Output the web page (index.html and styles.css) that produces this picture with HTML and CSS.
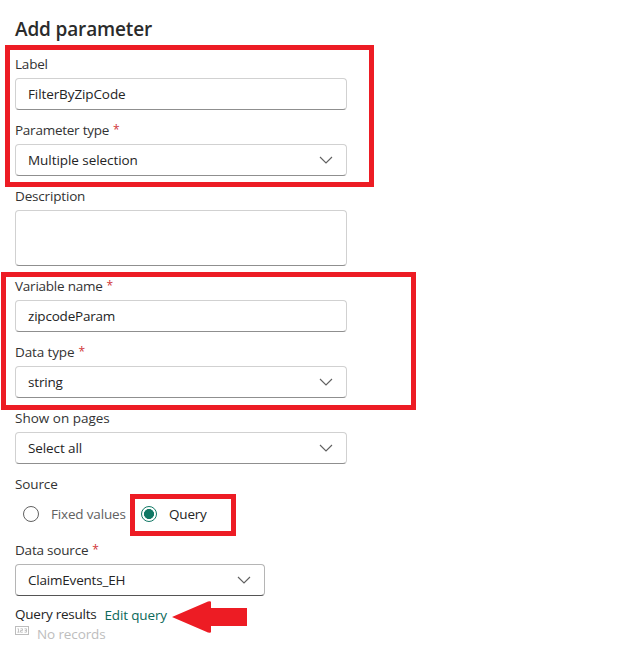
FILE: index.html
```
<!DOCTYPE html>
<html lang="en">
<head>
<meta charset="utf-8">
<title>Add parameter</title>
<link rel="stylesheet" href="styles.css">
</head>
<body>
<svg width="0" height="0" class="defs"><symbol id="chev" viewBox="0 0 14 8"><path d="M1 1 7 7 13 1" fill="none" stroke="currentColor" stroke-width="1.15"/></symbol></svg>
<main class="panel">
  <h1><span class="t-title">Add parameter</span></h1>
  <div class="field"><label><span class="t-label">Label</span></label><div class="box"><span class="t-filter">FilterByZipCode</span></div></div>
  <div class="field"><label><span class="t-ptype">Parameter type</span><i>*</i></label><div class="box"><span class="t-multi">Multiple selection</span><svg class="chev"><use href="#chev"/></svg></div></div>
  <div class="field"><label><span class="t-desc">Description</span></label><div class="box tall"></div></div>
  <div class="field"><label><span class="t-var">Variable name</span><i>*</i></label><div class="box"><span class="t-zip">zipcodeParam</span></div></div>
  <div class="field"><label><span class="t-dtype">Data type</span><i>*</i></label><div class="box"><span class="t-string">string</span><svg class="chev"><use href="#chev"/></svg></div></div>
  <div class="field"><label><span class="t-show">Show on pages</span></label><div class="box"><span class="t-all">Select all</span><svg class="chev"><use href="#chev"/></svg></div></div>
  <div class="field"><label><span class="t-source">Source</span></label>
    <div class="radios">
      <div class="radio"><b class="dot"></b><span class="t-fixed">Fixed values</span></div>
      <div class="radio on"><b class="dot"></b><span class="t-query">Query</span></div>
    </div>
  </div>
  <div class="field source"><label><span class="t-ds">Data source</span><i>*</i></label><div class="box strong"><span class="t-claim">ClaimEvents_EH</span><svg class="chev"><use href="#chev"/></svg></div></div>
  <div class="results"><span class="t-results">Query results</span><a><span class="t-edit">Edit query</span></a></div>
  <div class="empty">
    <svg width="15" height="12" viewBox="0 0 15 12" fill="none" stroke="#bdbdbd"><rect x=".5" y="2.5" width="13" height="8"/><path d="M2.5 4.8h1v3.4M2.3 8.2h2.2M5.5 4.8h2v1.7h-2v1.7h2.3M9.5 4.8h2v3.4h-2M9.8 6.5h1.7" stroke-width=".9"/></svg>
    <span class="t-norec">No records</span>
  </div>
</main>
<div class="mark mark-type"></div>
<div class="mark mark-variable"></div>
<div class="mark mark-query"></div>
<svg class="arrow" width="75" height="32" viewBox="0 0 75 32"><path d="M0 16 36 0.5Q39 0 39 1V7H75V25H39V31Q39 32 36 31.5Z" fill="#ed1c24"/></svg>
</body>
</html>
```
FILE: styles.css
```
* { box-sizing: border-box; }
body { margin: 0; background: #fff; color: #242424; font: 13.5px/20px "Open Sans", "Noto Sans", sans-serif; position: relative; height: 655px; overflow: hidden; }
.defs { position: absolute; }
.panel { width: 347px; padding: 15px 0 0 15px; }
h1 { margin: 0 0 11px; font-size: 19px; line-height: 28px; font-weight: 600; white-space: nowrap; color: #2b2b2b; }
.field { margin-bottom: 10px; }
label { display: flex; gap: 4px; height: 20px; margin-bottom: 4px; color: #333; white-space: nowrap; }
label i { color: #d13438; font-style: normal; font-size: 12px; }
.box { display: flex; align-items: center; justify-content: space-between; height: 32px; padding: 0 13px 0 12px; border: 1px solid #d1d1d1; border-bottom-color: #8f8f8f; border-radius: 4px; white-space: nowrap; }
.tall { height: 56px; }
.strong { border-color: #b5b5b5; border-bottom-color: #555; }
.chev { width: 14px; height: 8px; color: #616161; }
.radios { display: flex; height: 32px; }
.radio { display: flex; align-items: center; gap: 12px; width: 118px; padding-left: 8px; color: #616161; white-space: nowrap; }
.dot { width: 16px; height: 16px; border: 1px solid #616161; border-radius: 50%; }
.on { color: #242424; }
.on .dot { border-color: #117865; background: radial-gradient(circle, #117865 4.7px, #fff 5.3px); }
.source { width: 250px; margin-bottom: 8px; }
.results { display: flex; gap: 8px; height: 20px; white-space: nowrap; }
.results a { color: #0c695a; position: relative; top: 1px; }
.empty { display: flex; gap: 7px; height: 20px; color: #bdbdbd; white-space: nowrap; }
.t-title { letter-spacing: -.15px; }
.t-label { letter-spacing: -.2px; }
.t-filter { letter-spacing: -.1px; }
.t-ptype { letter-spacing: -.25px; }
.t-multi { letter-spacing: -.06px; }
.t-desc { letter-spacing: -.17px; }
.t-var { letter-spacing: -.23px; }
.t-zip { letter-spacing: -.2px; }
.t-dtype { letter-spacing: -.12px; }
.t-string { letter-spacing: -.17px; }
.t-all { letter-spacing: -.1px; }
.t-source { letter-spacing: -.12px; }
.t-fixed { letter-spacing: -.17px; }
.t-query { letter-spacing: -.2px; }
.t-ds { letter-spacing: -.2px; }
.t-claim { letter-spacing: -.2px; }
.t-results { letter-spacing: -.24px; }
.t-edit { letter-spacing: -.15px; }
.t-norec { letter-spacing: -.12px; }
.mark { position: absolute; border: 5px solid #ed1c24; }
.mark-type { left: 5px; top: 45px; width: 369px; height: 142px; }
.mark-variable { left: 1px; top: 272px; width: 415px; height: 138px; }
.mark-query { left: 130px; top: 494px; width: 106px; height: 42px; }
.arrow { position: absolute; left: 172px; top: 601px; }
```
